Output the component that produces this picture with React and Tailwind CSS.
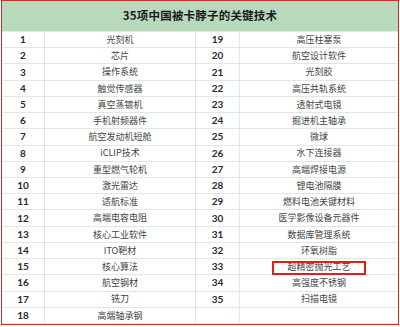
const left = [
  "光刻机", "芯片", "操作系统", "触觉传感器", "真空蒸镀机", "手机射频器件",
  "航空发动机短舱", "iCLIP技术", "重型燃气轮机", "激光雷达", "适航标准", "高端电容电阻",
  "核心工业软件", "ITO靶材", "核心算法", "航空钢材", "铣刀", "高端轴承钢",
];

const right = [
  "高压柱塞泵", "航空设计软件", "光刻胶", "高压共轨系统", "透射式电镜", "掘进机主轴承",
  "微球", "水下连接器", "高端焊接电源", "锂电池隔膜", "燃料电池关键材料", "医学影像设备元器件",
  "数据库管理系统", "环氧树脂", "超精密抛光工艺", "高强度不锈钢", "扫描电镜", "",
];

const font = { fontFamily: '"Noto Sans CJK SC", "Noto Sans", sans-serif' };
const numFont = { fontFamily: 'Lato, "Liberation Sans", sans-serif' };

export default function App() {
  return (
    <div className="w-[400px] h-[327px] bg-white" style={font}>
      <div className="ml-[1px] w-[398px] h-[325px] border border-[#c3302a] flex flex-col">
        {/* title */}
        <div className="h-[31px] bg-[#b9d9bb] flex items-center justify-center border-b border-[#dcebdc]">
          <span className="text-[11.5px] font-bold text-[#1b1b1b] tracking-[0.2px]">35项中国被卡脖子的关键技术</span>
        </div>

        {/* rows */}
        <div className="h-[292px] grid grid-cols-[43px_151px_44px_1fr] grid-rows-[repeat(18,minmax(0,1fr))]">
          {left.map((name, i) => {
            const n2 = i + 19;
            const rname = right[i];
            return [
              <div key={`a${i}`} className="border-r border-b border-[#dcebdc] flex items-center justify-center text-[10px] font-bold text-[#2a2a2a]" style={numFont}>
                {i + 1}
              </div>,
              <div key={`b${i}`} className="border-r border-b border-[#dcebdc] flex items-center justify-center text-[9px] text-[#444]">
                {name}
              </div>,
              <div key={`c${i}`} className="border-r border-b border-[#dcebdc] flex items-center justify-center text-[10px] font-bold text-[#2a2a2a]" style={numFont}>
                {rname ? n2 : ""}
              </div>,
              <div key={`d${i}`} className="relative border-b border-[#dcebdc] flex items-center justify-center text-[9px] text-[#444]">
                {rname}
                {n2 === 33 && (
                  <span className="absolute left-[32px] top-[2px] w-[94px] h-[14px] border-2 border-[#e51c1c]" />
                )}
              </div>,
            ];
          })}
        </div>
      </div>
    </div>
  );
}
